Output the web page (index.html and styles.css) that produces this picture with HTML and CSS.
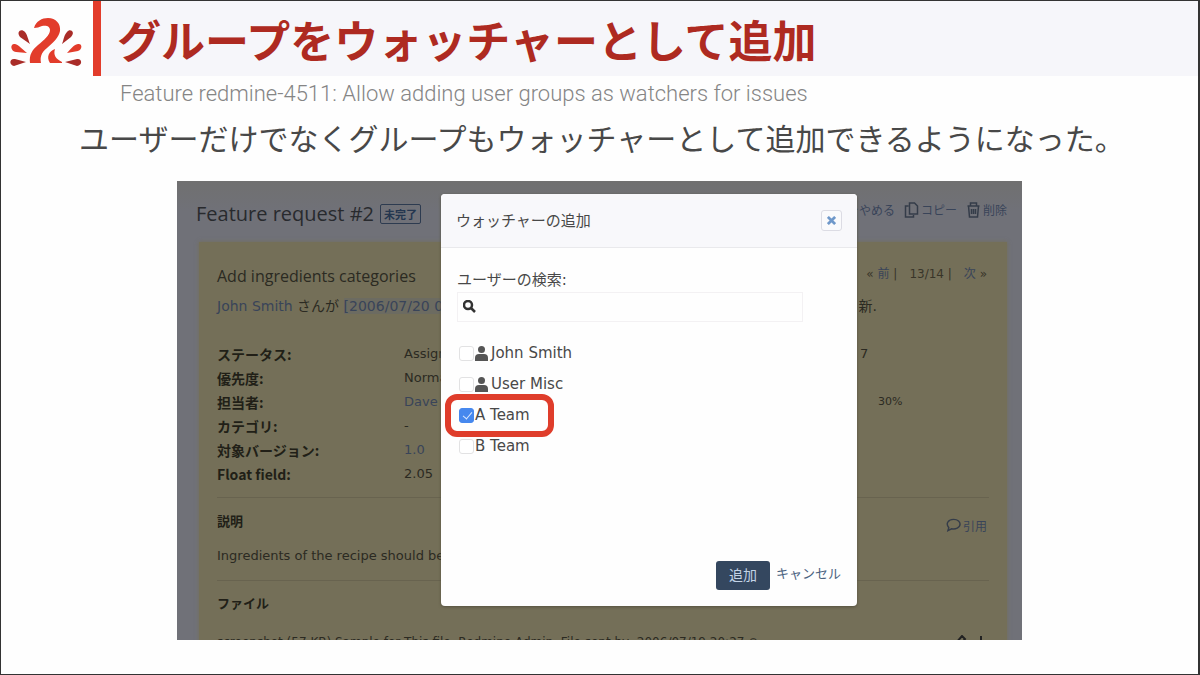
FILE: index.html
```html
<!DOCTYPE html>
<html lang="ja">
<head>
<meta charset="utf-8">
<title>グループをウォッチャーとして追加</title>
<link rel="stylesheet" href="styles.css">
</head>
<body>
<main class="slide">
  <header class="slide-header">
    <svg class="logo" viewBox="0 0 72 48" aria-hidden="true">
      <g fill="#e23c2b">
        <path d="M24 11C26 4 32 1 38 1C46 1 51 7 50 14C49 20 43 26 37 31C31 36 30 40 31 46H20C19 38 22 33 28 28C34 23 40 18 40 13C40 9 36 8 32 9C29 10 27 11 24 11Z"/>
        <path d="M45 32C43 38 46 42 52 45V46H40C36 40 39 34 45 32Z"/>
        <path d="M17 36L6 35C0 34 0 26 5 27C9 28 12 32 17 36Z"/>
        <path d="M57 36L68 34C73 32 72 26 68 27C63 28 61 32 57 36Z"/>
      </g>
      <g fill="#a92c28">
        <path d="M20 27L10 20C6 15 11 11 15 15C17 17 18 22 20 27Z"/>
        <path d="M52 27L61 20C66 15 60 11 57 15C54 18 54 22 52 27Z"/>
        <path d="M16 45L4 49C-1 48-1 41 5 42Z"/>
        <path d="M55 45L67 49C73 48 72 41 67 42Z"/>
      </g>
    </svg>
    <h1 class="slide-title">グループをウォッチャーとして追加</h1>
  </header>
  <p class="feature">Feature redmine-4511: Allow adding user groups as watchers for issues</p>
  <p class="lead">ユーザーだけでなくグループもウォッチャーとして追加できるようになった。</p>

  <section class="shot">
    <div class="page-head">
      <h2 class="issue-title">Feature request #2 <span class="badge">未完了</span></h2>
      <nav class="contextual">
        <a href="#">ウォッチをやめる</a>
        <a href="#"><svg class="icon" viewBox="0 0 14 16"><path d="M5 1H10L13 4V12H5ZM4 4H1V15H9V13"/></svg>コピー</a>
        <a href="#"><svg class="icon" viewBox="0 0 14 16"><path d="M1 4H13M4 4V1H10V4M2 4L3 15H11L12 4M5 7V12M7 7V12M9 7V12"/></svg>削除</a>
      </nav>
    </div>

    <article class="issue">
      <div class="row subject">
        <h3>Add ingredients categories</h3>
        <div class="pager"><span>« <a href="#">前</a> |</span><span>13/14 |</span><span><a href="#">次</a> »</span></div>
      </div>
      <div class="row author">
        <p><a href="#">John Smith</a> さんが <a class="stamp" href="#">[2006/07/20 0</a></p>
        <p class="updated">新.</p>
      </div>
      <table class="attributes">
        <tr><th scope="row">ステータス:</th><td>Assigned</td><td class="far">7</td></tr>
        <tr><th scope="row">優先度:</th><td>Normal</td><td></td></tr>
        <tr><th scope="row">担当者:</th><td><a href="#">Dave</a></td><td class="far percent">30%</td></tr>
        <tr><th scope="row">カテゴリ:</th><td>-</td><td></td></tr>
        <tr><th scope="row">対象バージョン:</th><td><a href="#">1.0</a></td><td></td></tr>
        <tr><th scope="row">Float field:</th><td>2.05</td><td></td></tr>
      </table>
      <section class="description">
        <div class="row">
          <h4>説明</h4>
          <a class="quote" href="#"><svg class="icon" viewBox="0 0 16 16"><path d="M2 14L3 11C-1 6 3 2 8 2C13 2 15 5 15 7C15 11 10 13 6 12Z"/></svg>引用</a>
        </div>
        <p>Ingredients of the recipe should be</p>
      </section>
      <section class="files">
        <h4>ファイル</h4>
        <div class="row file">
          <p>screenshot (57 KB) Sample for This file, Redmine Admin, File sent by, 2006/07/19 20:27 ⊘</p>
          <svg class="tools" viewBox="0 0 36 14"><path d="M2 12L3 8L9 1L12 4L6 11ZM28 1V10M24 7L28 11L32 7"/></svg>
        </div>
      </section>
    </article>

    <form class="dialog" role="dialog" aria-labelledby="dialog-title">
      <header class="dialog-head">
        <h2 id="dialog-title">ウォッチャーの追加</h2>
        <button class="close" type="button" aria-label="閉じる"><svg viewBox="0 0 10 10"><path d="M1 1L9 9M9 1L1 9"/></svg></button>
      </header>
      <div class="dialog-body">
        <label class="search-label" for="search">ユーザーの検索:</label>
        <div class="search">
          <svg viewBox="0 0 14 14" aria-hidden="true"><circle cx="5" cy="5" r="4"/><path d="M8 8L12 12"/></svg>
          <input id="search" type="text">
        </div>
        <div class="choices">
          <label><input type="checkbox"><svg class="person" viewBox="0 0 13 15"><circle cx="6.5" cy="3.5" r="3.5"/><path d="M0 15V12Q0 8 4 8H9Q13 8 13 12V15Z"/></svg>John Smith</label>
          <label><input type="checkbox"><svg class="person" viewBox="0 0 13 15"><circle cx="6.5" cy="3.5" r="3.5"/><path d="M0 15V12Q0 8 4 8H9Q13 8 13 12V15Z"/></svg>User Misc</label>
          <label class="marked"><input type="checkbox" checked>A Team</label>
          <label><input type="checkbox">B Team</label>
        </div>
      </div>
      <footer class="dialog-foot">
        <button class="add" type="button">追加</button>
        <a href="#">キャンセル</a>
      </footer>
    </form>
  </section>
</main>
</body>
</html>
```
FILE: styles.css
```css
* { box-sizing: border-box; }

body {
  margin: 0;
  font-family: "DejaVu Sans", "Noto Sans CJK JP", sans-serif;
  font-size: 12px;
  background: #fefefe;
}

h1, h2, h3, h4, p { margin: 0; font-weight: 400; }
a { color: inherit; text-decoration: none; }
svg { flex: none; }

.slide {
  min-height: 100vh;
  border: 1px solid #333;
  border-right-width: 2px;
  background: #fefefe;
}

.slide-header {
  display: flex;
  align-items: stretch;
  height: 75px;
}
.logo {
  width: 72px;
  height: 48px;
  margin: 16px 11px 0 9px;
  overflow: visible;
}
.slide-title {
  flex: 1;
  padding-left: 16px;
  border-left: 8px solid #e23c2b;
  background: #f6f6fa;
  color: #ae2a21;
  font: 700 44px/76px "Noto Sans CJK JP", sans-serif;
  white-space: nowrap;
}

.feature {
  padding-left: 119px;
  color: #858585;
  font: 300 22px/36px Roboto, sans-serif;
  white-space: nowrap;
}
.lead {
  padding-left: 78px;
  color: #484848;
  font: 400 30px/50px "Noto Sans CJK JP", sans-serif;
  white-space: nowrap;
}

.shot {
  position: relative;
  width: 845px;
  height: 459px;
  max-width: 100%;
  margin: 19px auto 0;
  padding: 0 15px 0 19px;
  overflow: hidden;
  background: linear-gradient(#707070, #707178 30px, #707178);
  color: #2b2a22;
}
.shot a { color: #394459; }

.page-head {
  display: flex;
  align-items: center;
  justify-content: space-between;
  height: 61px;
}
.issue-title {
  display: flex;
  align-items: center;
  gap: 6px;
  padding-top: 4px;
  color: #282a2e;
  font: 500 20px/24px "Open Sans", sans-serif;
}
.badge {
  padding: 0 3px;
  border: 1px solid #2d3b50;
  border-radius: 2px;
  color: #24364f;
  font: 700 11px/18px "Noto Sans CJK JP", sans-serif;
}
.contextual {
  display: flex;
  gap: 9px;
  padding-bottom: 4px;
  font-size: 12px;
}
.contextual a, .quote { display: flex; align-items: center; gap: 2px; }
.icon {
  width: 15px;
  height: 16px;
  fill: none;
  stroke: #343c49;
  stroke-width: 1.5;
}

.issue {
  margin-left: 3px;
  padding: 20px 18px 0;
  background: #746f58;
  box-shadow: 0 0 4px #746f58;
}
.row {
  display: flex;
  align-items: center;
  justify-content: space-between;
  white-space: nowrap;
}
.subject { height: 28px; }
.subject h3 { font: 500 16px/28px "Open Sans", sans-serif; }
.pager {
  display: flex;
  align-items: center;
  gap: 12px;
  padding: 0 2px 4px 0;
  color: #383529;
  font-family: "DejaVu Sans", "Noto Sans CJK JP", sans-serif;
}
.pager span { line-height: 18px; }
.author { height: 30px; font-size: 14px; }
.stamp { background: #6c6b61; }
.updated { padding-right: 112px; }

.attributes {
  width: 100%;
  margin-top: 22px;
  border-collapse: collapse;
  table-layout: fixed;
}
.attributes tr { height: 24px; }
.attributes th, .attributes td { padding: 0; text-align: left; }
.attributes th {
  width: 187px;
  color: #211f17;
  font: 700 14px/24px "Noto Sans CJK JP", sans-serif;
}
.attributes td { font-size: 13px; line-height: 24px; }
.attributes .far { width: 129px; }
.attributes .percent { padding-left: 18px; font-size: 11px; }

.description {
  margin-top: 11px;
  padding-top: 10px;
  border-top: 1px solid #68634f;
}
.description .row { height: 28px; }
.description p { padding: 10px 0; font-size: 13px; line-height: 20px; }
h4 { color: #211f17; font-size: 13px; font-weight: 700; line-height: 28px; }
.quote { padding: 6px 2px 0 0; font-size: 12px; }
.files { padding-top: 9px; margin-top: 4px; border-top: 1px solid #68634f; }
.file { padding: 16px 0 10px; line-height: 16px; }
.tools { width: 36px; height: 14px; fill: none; stroke: #222; stroke-width: 2; }

.dialog {
  position: absolute;
  top: 13px;
  left: 264px;
  display: flex;
  flex-direction: column;
  width: 416px;
  height: 412px;
  border-radius: 4px;
  background: #fefefe;
  box-shadow: 0 1px 3px #55523f;
  color: #484848;
  font-size: 15px;
}
.dialog-head {
  display: flex;
  align-items: center;
  justify-content: space-between;
  height: 54px;
  padding: 0 15px;
  border-bottom: 1px solid #e9e9ec;
  border-radius: 4px 4px 0 0;
  background: #f8f8fb;
}
.dialog-head h2 { font-size: 15px; line-height: 24px; }
.close {
  display: grid;
  place-items: center;
  width: 21px;
  height: 21px;
  padding: 0;
  border: 1px solid #dcdce4;
  border-radius: 3px;
  background: #fafafc;
}
.close svg { width: 9px; height: 9px; stroke: #6f98ca; stroke-width: 3; }

.dialog-body { flex: 1; padding: 20px 16px 0; }
.search-label { display: block; line-height: 24px; }
.search {
  display: flex;
  align-items: center;
  width: 346px;
  height: 30px;
  padding-left: 5px;
  border: 1px solid #f3f1f3;
}
.search svg { width: 14px; height: 14px; fill: none; stroke: #333; stroke-width: 2.5; }
.search input { flex: 1; min-width: 0; height: 28px; border: 0; outline: 0; background: none; }

.choices { display: grid; gap: 7px; padding: 19px 0 0 2px; justify-items: start; }
.choices label { position: relative; display: flex; align-items: center; height: 24px; line-height: 24px; }
.choices input {
  appearance: none;
  width: 15px;
  height: 15px;
  margin: 0 1px 0 0;
  border: 1px solid #e2e2e3;
  border-radius: 3px;
  background: #fff;
}
.choices input:checked {
  border-color: #4688ee;
  background: #4688ee;
}
.choices input:checked::after {
  content: "";
  display: block;
  width: 4px;
  height: 8px;
  margin: 1px 0 0 5px;
  border: solid #dce9ff;
  border-width: 0 1px 1px 0;
  transform: rotate(40deg);
}
.person { width: 13px; height: 15px; margin-right: 3px; fill: #555; }
.marked::after {
  content: "";
  position: absolute;
  inset: -9px -24px -10px -14px;
  border: 6px solid #df3d2b;
  border-radius: 12px;
}

.dialog-foot {
  display: flex;
  align-items: center;
  justify-content: flex-end;
  gap: 6px;
  padding: 0 16px 16px;
  font-size: 13px;
}
.dialog-foot a { padding-bottom: 6px; color: #4b6280; }
.add {
  width: 54px;
  height: 29px;
  padding: 0 0 4px;
  border: 0;
  border-radius: 3px;
  background: #34475f;
  color: #c3d3e6;
  font: 14px/24px "Noto Sans CJK JP", sans-serif;
}
```
